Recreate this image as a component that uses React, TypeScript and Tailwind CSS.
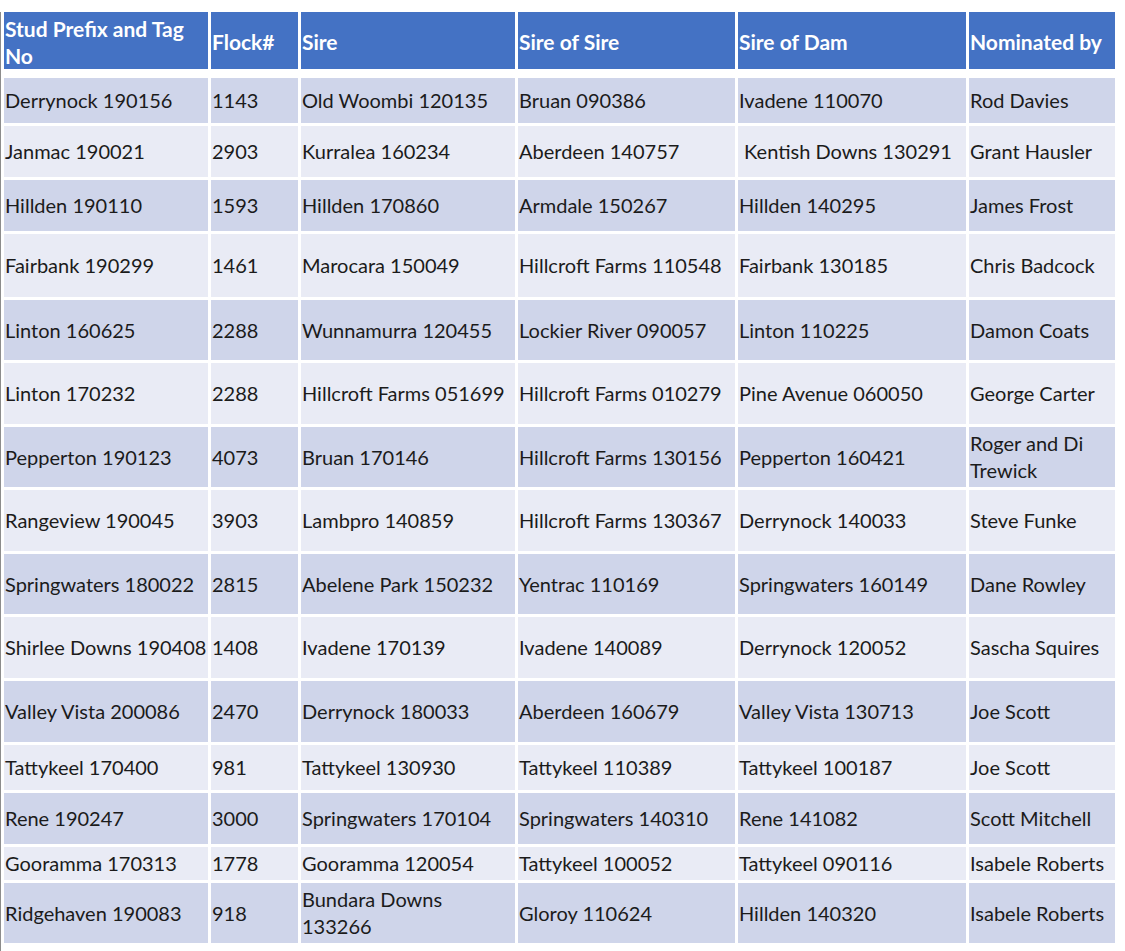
const headers = ["Stud Prefix and Tag No", "Flock#", "Sire", "Sire of Sire", "Sire of Dam", "Nominated by"];

type Row = { h: string; cells: string[] };

const rows: Row[] = [
  { h: "h-[45px]", cells: ["Derrynock 190156", "1143", "Old Woombi 120135", "Bruan 090386", "Ivadene 110070", "Rod Davies"] },
  { h: "h-[51px]", cells: ["Janmac 190021", "2903", "Kurralea 160234", "Aberdeen 140757", "\u00a0Kentish Downs 130291", "Grant Hausler"] },
  { h: "h-[51px]", cells: ["Hillden 190110", "1593", "Hillden 170860", "Armdale 150267", "Hillden 140295", "James Frost"] },
  { h: "h-[63px]", cells: ["Fairbank 190299", "1461", "Marocara 150049", "Hillcroft Farms 110548", "Fairbank 130185", "Chris Badcock"] },
  { h: "h-[60px]", cells: ["Linton 160625", "2288", "Wunnamurra 120455", "Lockier River 090057", "Linton 110225", "Damon Coats"] },
  { h: "h-[61px]", cells: ["Linton 170232", "2288", "Hillcroft Farms 051699", "Hillcroft Farms 010279", "Pine Avenue 060050", "George Carter"] },
  { h: "h-[60px]", cells: ["Pepperton 190123", "4073", "Bruan 170146", "Hillcroft Farms 130156", "Pepperton 160421", "Roger and Di\nTrewick"] },
  { h: "h-[61px]", cells: ["Rangeview 190045", "3903", "Lambpro 140859", "Hillcroft Farms 130367", "Derrynock 140033", "Steve Funke"] },
  { h: "h-[60px]", cells: ["Springwaters 180022", "2815", "Abelene Park 150232", "Yentrac 110169", "Springwaters 160149", "Dane Rowley"] },
  { h: "h-[61px]", cells: ["Shirlee Downs 190408", "1408", "Ivadene 170139", "Ivadene 140089", "Derrynock 120052", "Sascha Squires"] },
  { h: "h-[61px]", cells: ["Valley Vista 200086", "2470", "Derrynock 180033", "Aberdeen 160679", "Valley Vista 130713", "Joe Scott"] },
  { h: "h-[45px]", cells: ["Tattykeel 170400", "981", "Tattykeel 130930", "Tattykeel 110389", "Tattykeel 100187", "Joe Scott"] },
  { h: "h-[51px]", cells: ["Rene 190247", "3000", "Springwaters 170104", "Springwaters 140310", "Rene 141082", "Scott Mitchell"] },
  { h: "h-[33px]", cells: ["Gooramma 170313", "1778", "Gooramma 120054", "Tattykeel 100052", "Tattykeel 090116", "Isabele Roberts"] },
  { h: "h-[60px]", cells: ["Ridgehaven 190083", "918", "Bundara Downs\n133266", "Gloroy 110624", "Hillden 140320", "Isabele Roberts"] },
];

const gridCols = "grid grid-cols-[204px_87px_214px_217px_228px_146px] gap-x-[3px]";

function CellText({ text }: { text: string }) {
  const lines = text.split("\n");
  return (
    <span className="whitespace-pre">
      {lines.map((l, i) => (
        <span key={i} className="block">
          {l}
        </span>
      ))}
    </span>
  );
}

export default function App() {
  return (
    <div
      className="w-[1125px] h-[951px] bg-white overflow-hidden text-[#1b1b1b]"
      style={{ fontFamily: "Lato, 'Noto Sans', sans-serif" }}
    >
      <div className="mt-[12px] border-l border-[#8c8c8c] pl-[3px] pb-[8px]">
        <div className={`${gridCols} h-[57px]`}>
          {headers.map((h, i) => (
            <div
              key={h}
              className="bg-[#4472c4] text-white font-bold text-[21px] leading-[27px] flex items-center px-[1px] pt-[2px]"
            >
              {i === 0 ? (
                <span className="whitespace-nowrap">
                  Stud Prefix and Tag
                  <br />
                  No
                </span>
              ) : (
                <span className="whitespace-nowrap">{h}</span>
              )}
            </div>
          ))}
        </div>
        <div className="mt-[9px] flex flex-col gap-y-[3px]">
          {rows.map((r, ri) => (
            <div key={ri} className={`${gridCols} ${r.h}`}>
              {r.cells.map((c, ci) => (
                <div
                  key={ci}
                  className={`${ri % 2 === 0 ? "bg-[#cfd5ea]" : "bg-[#e9ebf5]"} flex items-center px-[1px] text-[20px] leading-[27px] overflow-hidden`}
                >
                  <CellText text={c} />
                </div>
              ))}
            </div>
          ))}
        </div>
      </div>
    </div>
  );
}
